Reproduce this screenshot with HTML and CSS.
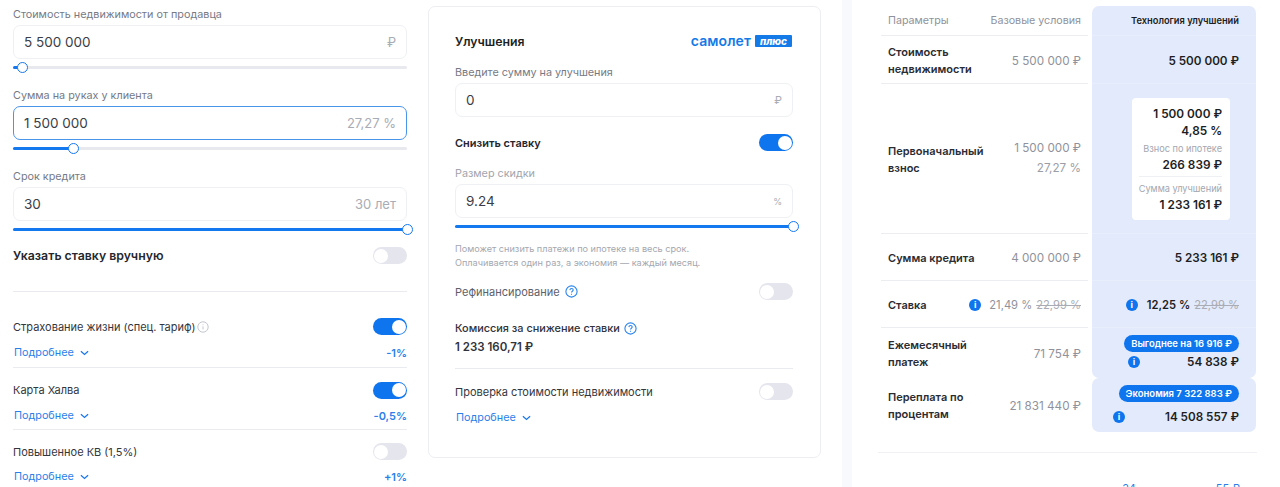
FILE: index.html
```html
<!DOCTYPE html>
<html lang="ru">
<head>
<meta charset="utf-8">
<title>Калькулятор</title>
<link rel="stylesheet" href="styles.css">
</head>
<body>
<div class="page">
  <section class="left">
    <div class="field">
      <label class="label">Стоимость недвижимости от продавца</label>
      <div class="input"><span class="value">5 500 000</span><span class="unit">₽</span></div>
      <div class="slider"><div class="fill" style="width:2.5%"></div><i class="thumb"></i></div>
    </div>
    <div class="field">
      <label class="label">Сумма на руках у клиента</label>
      <div class="input focus"><span class="value">1 500 000</span><span class="unit">27,27 %</span></div>
      <div class="slider"><div class="fill" style="width:15%"></div><i class="thumb"></i></div>
    </div>
    <div class="field">
      <label class="label">Срок кредита</label>
      <div class="input"><span class="value">30</span><span class="unit">30 лет</span></div>
      <div class="slider"><div class="fill" style="width:100%"></div><i class="thumb"></i></div>
    </div>
    <div class="row manual"><strong class="manual-title">Указать ставку вручную</strong><i class="toggle"></i></div>
    <hr class="divider first">
    <div class="option opt-first">
      <div class="row"><span class="opt-name">Страхование жизни (спец. тариф)<svg class="hint" viewBox="0 0 12 12" width="12" height="12"><circle cx="6" cy="6" r="5.2" fill="none" stroke="#c3c6cf"/><path d="M6 5.4v3M6 3.4v.9" stroke="#c3c6cf"/></svg></span><i class="toggle on"></i></div>
      <div class="row more-row"><a class="more">Подробнее <svg viewBox="0 0 10 6" width="9" height="6"><path d="M1 1l4 3.6L9 1" fill="none" stroke="#1878ee" stroke-width="1.4"/></svg></a><b class="delta">-1%</b></div>
    </div>
    <div class="option">
      <div class="row"><span class="opt-name">Карта Халва</span><i class="toggle on"></i></div>
      <div class="row more-row"><a class="more">Подробнее <svg viewBox="0 0 10 6" width="9" height="6"><path d="M1 1l4 3.6L9 1" fill="none" stroke="#1878ee" stroke-width="1.4"/></svg></a><b class="delta">-0,5%</b></div>
    </div>
    <div class="option last">
      <div class="row"><span class="opt-name">Повышенное КВ (1,5%)</span><i class="toggle"></i></div>
      <div class="row more-row"><a class="more">Подробнее <svg viewBox="0 0 10 6" width="9" height="6"><path d="M1 1l4 3.6L9 1" fill="none" stroke="#1878ee" stroke-width="1.4"/></svg></a><b class="delta">+1%</b></div>
    </div>
  </section>

  <section class="card">
    <div class="row card-head">
      <h2 class="card-title">Улучшения</h2>
      <div class="logo"><span class="logo-word">самолет</span><span class="logo-plus">плюс</span></div>
    </div>
    <div class="field">
      <label class="label">Введите сумму на улучшения</label>
      <div class="input"><span class="value">0</span><span class="unit small">₽</span></div>
    </div>
    <div class="row cut"><strong class="cut-title">Снизить ставку</strong><i class="toggle on"></i></div>
    <div class="field">
      <label class="label pale">Размер скидки</label>
      <div class="input"><span class="value">9.24</span><span class="unit tiny">%</span></div>
      <div class="slider"><div class="fill" style="width:100%"></div><i class="thumb"></i></div>
    </div>
    <p class="note">Поможет снизить платежи по ипотеке на весь срок.<br>Оплачивается один раз, а экономия — каждый месяц.</p>
    <div class="row refi"><span class="refi-name">Рефинансирование<svg class="q" viewBox="0 0 13 13" width="13" height="13"><circle cx="6.5" cy="6.5" r="5.6" fill="none" stroke="#2a85ee" stroke-width="1.1"/><path d="M4.9 5.1c.1-2.1 3.3-2 3.3-.1 0 1.200-1.700 1.300-1.700 2.600M6.500 8.700v1" fill="none" stroke="#2a85ee" stroke-width="1.100"/></svg></span><i class="toggle"></i></div>
    <div class="fee-title">Комиссия за снижение ставки<svg class="q" viewBox="0 0 13 13" width="13" height="13"><circle cx="6.5" cy="6.5" r="5.6" fill="none" stroke="#2a85ee" stroke-width="1.1"/><path d="M4.9 5.1c.1-2.1 3.3-2 3.3-.1 0 1.200-1.700 1.300-1.700 2.600M6.500 8.700v1" fill="none" stroke="#2a85ee" stroke-width="1.100"/></svg></div>
    <div class="fee-value">1 233 160,71 ₽</div>
    <hr class="divider card-line">
    <div class="row check"><span class="opt-name">Проверка стоимости недвижимости</span><i class="toggle"></i></div>
    <a class="more check-more">Подробнее <svg viewBox="0 0 10 6" width="9" height="6"><path d="M1 1l4 3.6L9 1" fill="none" stroke="#1878ee" stroke-width="1.4"/></svg></a>
  </section>

  <div class="gutter"></div>

  <section class="right">
    <div class="t-row t-head">
      <div class="c-name">Параметры</div>
      <div class="c-base">Базовые условия</div>
      <div class="c-tech">Технология улучшений</div>
    </div>
    <div class="t-row r1 nudge">
      <div class="c-name strong">Стоимость<br>недвижимости</div>
      <div class="c-base">5 500 000 ₽</div>
      <div class="c-tech big">5 500 000 ₽</div>
    </div>
    <div class="t-row r2">
      <div class="c-name strong name-two">Первоначальный<br>взнос</div>
      <div class="c-base stack"><span>1 500 000 ₽</span><span class="pct">27,27 %</span></div>
      <div class="c-tech center">
        <div class="box">
          <b>1 500 000 ₽</b>
          <b>4,85 %</b>
          <small>Взнос по ипотеке</small>
          <b>266 839 ₽</b>
          <hr class="box-line">
          <small>Сумма улучшений</small>
          <b>1 233 161 ₽</b>
        </div>
      </div>
    </div>
    <div class="t-row r3 nudge">
      <div class="c-name strong">Сумма кредита</div>
      <div class="c-base">4 000 000 ₽</div>
      <div class="c-tech big">5 233 161 ₽</div>
    </div>
    <div class="t-row r4 nudge">
      <div class="c-name strong">Ставка</div>
      <div class="c-base rate"><i class="info">i</i><span>21,49 %</span><s>22,99 %</s></div>
      <div class="c-tech big rate"><i class="info">i</i><span>12,25 %</span><s>22,99 %</s></div>
    </div>
    <div class="t-row r5">
      <div class="c-name strong name-two">Ежемесячный<br>платеж</div>
      <div class="c-base name-two">71 754 ₽</div>
      <div class="c-tech pay bottom-round">
        <span class="pill">Выгоднее на 16 916 ₽</span>
        <div class="pay-line narrow"><i class="info">i</i><b>54 838 ₽</b></div>
      </div>
    </div>
    <div class="t-row r6">
      <div class="c-name strong name-two">Переплата по<br>процентам</div>
      <div class="c-base name-two">21 831 440 ₽</div>
      <div class="c-tech pay all-round">
        <span class="pill">Экономия 7 322 883 ₽</span>
        <div class="pay-line"><i class="info">i</i><b>14 508 557 ₽</b></div>
      </div>
    </div>
    <hr class="divider end">
    <div class="cut-off"><span>24</span><span>55 ₽</span></div>
  </section>
</div>
</body>
</html>
```

FILE: styles.css
```css
* { box-sizing: border-box; }
html, body { margin: 0; height: 487px; overflow: hidden; background: #fff; }
body { font-family: Inter, "Noto Sans", sans-serif; color: #24272e; font-size: 11px; }
i { font-style: normal; display: block; }
.page { display: flex; height: 487px; overflow: hidden; align-items: flex-start; }
.row { display: flex; justify-content: space-between; align-items: center; }

.left { width: 394px; margin-left: 13px; padding-top: 7px; flex: none; }
.field { display: flex; flex-direction: column; }
.left .field { height: 81px; }
.left .field:nth-child(3) { height: 78px; }
.label { font-size: 10.800px; line-height: 14px; height: 18px; padding-top: 1px; color: #767a85; }
.label.pale { color: #a2a5ae; }
.input { height: 34px; border: 1px solid #eef0f4; border-radius: 7px; background: #fff; display: flex; justify-content: space-between; align-items: center; padding: 0 10px; }
.input.focus { border-color: #4a95ec; }
.value { font-size: 13.500px; color: #3a3d45; }
.unit { font-size: 13px; color: #a9acb4; }
.unit.small { font-size: 11px; }
.unit.tiny { font-size: 9px; }
.slider { position: relative; height: 3px; margin-top: 7px; border-radius: 2px; background: #e8e9ee; }
.fill { height: 3px; border-radius: 2px; background: #1478ee; }
.thumb { position: absolute; top: -4px; width: 11px; height: 11px; margin-left: -5px; border: 1.300px solid #1478ee; border-radius: 50%; background: #fff; }
.field:nth-child(1) .thumb { left: 9px; }
.field:nth-child(2) .thumb { left: 59.500px; }
.field:nth-child(3) .thumb { left: 394px; }
.toggle { width: 34px; height: 17px; border-radius: 9px; background: #e4e5ed; position: relative; flex: none; }
.toggle::after { content: ""; position: absolute; left: 1px; top: 1.500px; width: 14px; height: 14px; border-radius: 50%; background: #fff; }
.toggle.on { background: #0f75ee; }
.toggle.on::after { left: 19px; }

.manual { height: 17px; }
.manual-title { font-size: 12.300px; font-weight: 600; color: #25272d; }
.divider { border: 0; height: 1px; background: #e9ebf0; margin: 0; }
.first { margin-top: 27px; margin-bottom: 26px; }
.option { border-bottom: 1px solid #e9ebf0; height: 61.500px; padding-top: 13.500px; }
.opt-first { height: 50px; padding-top: 0; }
.opt-first .more-row { margin-top: 11px; }
.option.last { border: 0; }
.opt-name { font-size: 11px; color: #33363d; display: flex; align-items: center; gap: 2px; white-space: pre; }
.more-row { margin-top: 10px; height: 14px; }
.more { font-size: 10.800px; line-height: 14px; color: #2a80ea; display: inline-flex; align-items: center; gap: 3px; white-space: pre; padding-left: 1px; }
.delta { font-size: 11px; font-weight: 600; color: #2a80ea; }

.card { width: 393px; height: 452px; margin: 6px 0 0 21px; flex: none; border: 1px solid #eceef2; border-radius: 7px; padding: 0 27px 0 26px; }
.card-head { height: 20px; margin-top: 24px; margin-bottom: 14px; }
.card-title { margin: 0; font-size: 12.300px; font-weight: 600; color: #1d1f24; }
.logo { display: flex; align-items: center; gap: 4px; padding-right: 1px; }
.logo-word { font-size: 14px; line-height: 14px; font-weight: 600; color: #147ae8; letter-spacing: .1px; }
.logo-plus { width: 37px; text-align: center; font-size: 10px; font-weight: 800; font-style: italic; color: #fff; background: #147ae8; border-radius: 1px; line-height: 12px; }
.card .label { height: 18px; }
.cut { margin-top: 17px; height: 17px; margin-bottom: 15px; }
.cut-title { font-size: 11px; font-weight: 600; color: #25272d; }
.card .field:nth-of-type(n) .thumb { left: 338px; }
.note { margin: 14px 0 0; font-size: 9.150px; line-height: 13.500px; color: #a4a7af; }
.refi { margin-top: 14px; height: 17px; }
.refi-name { font-size: 11px; color: #5d606a; display: flex; align-items: center; gap: 5px; white-space: pre; }
.fee-title { margin-top: 21px; font-size: 10.900px; font-weight: 500; color: #30333a; display: flex; align-items: center; gap: 4px; white-space: pre; line-height: 14px; }
.fee-value { margin-top: 5px; font-size: 11.500px; font-weight: 600; color: #30333a; line-height: 14px; }
.card-line { margin-top: 14px; }
.check { margin-top: 14px; height: 17px; }
.check-more { margin-top: 11px; }

.gutter { width: 10px; height: 487px; margin-left: 21px; background: #f8f9fc; flex: none; }

.right { width: 377px; margin-left: 29px; padding-top: 6px; flex: none; }
.t-row { display: grid; grid-template-columns: 100px 107px 168px; }
.t-row > div { display: flex; align-items: center; }
.c-name { padding-left: 7px; font-size: 11px; color: #2a2c33; border-bottom: 1px solid #ebedf1; line-height: 17px; white-space: nowrap; }
.c-name.strong { font-weight: 600; }
.name-two { padding-top: 2px; }
.c-base { justify-content: flex-end; padding-right: 7px; font-size: 11.700px; color: #8f929b; border-bottom: 1px solid #ebedf1; white-space: nowrap; }
.c-tech { margin-left: 4px; justify-content: flex-end; padding-right: 17px; background: #e3eafb; border-bottom: 1px solid #e8eefb; font-size: 11.700px; color: #1c1e24; white-space: nowrap; }
.big { font-weight: 600; }
.t-head { height: 30px; }
.t-head .c-name, .t-head .c-base { color: #8f929b; font-weight: 400; font-size: 10.700px; }
.t-head .c-tech { font-size: 9.300px; font-weight: 600; border-radius: 7px 7px 0 0; }
.nudge > div { padding-top: 2px; }
.r1 { height: 48px; }
.r2 { height: 150px; }
.r3 { height: 47px; }
.r4 { height: 47px; }
.r5 { height: 50px; }
.r6 { height: 54px; }
.stack { flex-direction: column; align-items: flex-end !important; justify-content: center; gap: 5.500px; line-height: 15px; }
.pct { color: #9b9ea6; }
.center { justify-content: center; padding: 0 0 0 14px; }
.box { width: 98px; background: #fff; border-radius: 4px; padding: 8px 8px 6px 7px; display: flex; flex-direction: column; align-items: flex-end; }
.box b { font-size: 11.800px; font-weight: 600; line-height: 17px; color: #1c1e24; }
.box small { font-size: 9.200px; line-height: 13px; color: #a4a7af; margin-top: 2px; }
.box small + b { margin-top: 2px; }
.box-line { width: 100%; height: 1px; border: 0; background: #eef0f4; margin: 2px 0 3px; }
.rate { gap: 4px; font-size: 11.200px; }
.rate s { color: #a9acb4; font-weight: 400; }
.c-base.rate .info { margin-right: 4px; }
.c-tech.rate .info { margin-right: 5px; }
.info { width: 12px; height: 12px; flex: none; border-radius: 50%; background: #0f75ee; color: #fff; font-size: 9px; font-weight: 700; line-height: 12px; text-align: center; }
.pay { flex-direction: column; align-items: flex-end !important; justify-content: flex-start; gap: 2px; }
.bottom-round { border-radius: 0 0 7px 7px; border: 0 !important; padding-top: 7px; }
.all-round { border-radius: 7px; border: 0 !important; padding-top: 7px; }
.pill { height: 17px; line-height: 17px; padding: 0 7px; border-radius: 9px; background: #0f75ee; color: #fff; font-size: 9.500px; font-weight: 600; }
.pay-line { display: flex; justify-content: space-between; align-items: center; font-size: 11.700px; width: 126px; }
.pay-line b { font-weight: 600; }
.pay-line.narrow { width: 111px; margin-top: 1px; }
.r6 .pay-line { margin-top: 6px; }
.r5 > .c-name, .r5 > .c-base, .r6 > .c-name, .r6 > .c-base { border: 0; }
.end { margin-top: 20px; margin-left: -3px; width: 379px; background: #eff1f4; }
.cut-off { display: flex; justify-content: flex-end; gap: 80px; padding-right: 18px; margin-top: 28px; color: #2a80ea; font-size: 11px; line-height: 14px; }
```
